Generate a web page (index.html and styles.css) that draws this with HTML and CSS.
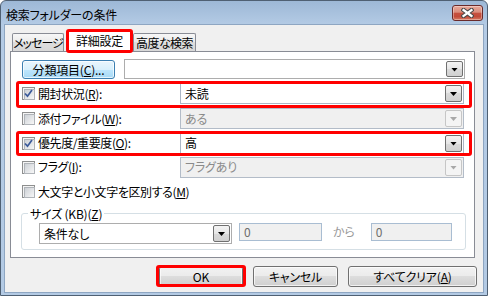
FILE: index.html
```html
<!DOCTYPE html>
<html lang="ja">
<head>
<meta charset="utf-8">
<title>検索フォルダーの条件</title>
<link rel="stylesheet" href="styles.css">
</head>
<body>
<div class="window">
  <div class="titlebar">
    <span class="title">検索フォルダーの条件</span>
    <span class="close">
      <svg width="13" height="10" viewBox="0 0 13 10">
        <path d="M2.5 2 L10.5 8 M10.5 2 L2.5 8" stroke="#4a4a4a" stroke-width="4.4" stroke-linecap="square" fill="none"/>
        <path d="M2.5 2 L10.5 8 M10.5 2 L2.5 8" stroke="#ffffff" stroke-width="2.2" stroke-linecap="square" fill="none"/>
      </svg>
    </span>
  </div>
  <div class="client">
    <div class="tabs">
      <div class="tab t1">メッセージ</div>
      <div class="tab active">詳細設定</div>
      <div class="tab t3">高度な検索</div>
    </div>
    <div class="panel">
      <div class="row1">
        <div class="btn blue cat">分類項目(<u>C</u>)...</div>
        <div class="combo wide"><span class="val"></span><span class="arrow"><i></i></span></div>
      </div>
      <div class="row hl r25">
        <span class="cb checked"><svg width="9" height="9" viewBox="0 0 9 9"><path d="M1 4.5 L3.5 7.2 L8 1" stroke="#3b5a9a" stroke-width="1.7" fill="none"/></svg></span>
        <span class="lbl">開封状況(<u>R</u>):</span>
        <div class="combo"><span class="val">未読</span><span class="arrow"><i></i></span></div>
      </div>
      <div class="row r25">
        <span class="cb"></span>
        <span class="lbl">添付ファイル(<u>W</u>):</span>
        <div class="combo dis"><span class="val">ある</span><span class="arrow"><i></i></span></div>
      </div>
      <div class="row hl hl-b r24">
        <span class="cb checked"><svg width="9" height="9" viewBox="0 0 9 9"><path d="M1 4.5 L3.5 7.2 L8 1" stroke="#3b5a9a" stroke-width="1.7" fill="none"/></svg></span>
        <span class="lbl">優先度/重要度(<u>O</u>):</span>
        <div class="combo"><span class="val">高</span><span class="arrow"><i></i></span></div>
      </div>
      <div class="row r24">
        <span class="cb"></span>
        <span class="lbl">フラグ(<u>I</u>):</span>
        <div class="combo dis"><span class="val">フラグあり</span><span class="arrow"><i></i></span></div>
      </div>
      <div class="row r25">
        <span class="cb"></span>
        <span class="lbl">大文字と小文字を区別する(<u>M</u>)</span>
      </div>
      <fieldset class="group">
        <legend>サイズ (KB)(<u>Z</u>)</legend>
        <div class="group-row">
          <div class="combo size"><span class="val">条件なし</span><span class="arrow"><i></i></span></div>
          <div class="input dis">0</div>
          <span class="kara">から</span>
          <div class="input dis in2">0</div>
        </div>
      </fieldset>
    </div>
    <div class="buttons">
      <div class="btn ok">OK</div>
      <div class="btn cancel">キャンセル</div>
      <div class="btn clear">すべてクリア(<u>A</u>)</div>
    </div>
  </div>
</div>
</body>
</html>
```

FILE: styles.css
```css
* { box-sizing: border-box; }
html, body { margin: 0; padding: 0; }
body {
  width: 488px;
  height: 296px;
  overflow: hidden;
  background: #ffffff;
  font-family: "Noto Sans CJK JP", "Noto Sans", sans-serif;
  font-size: 12px;
  font-feature-settings: "palt";
  letter-spacing: -0.2px;
  color: #000;
}
u { text-decoration: underline; text-underline-offset: 1px; }

.window {
  width: 488px;
  height: 296px;
  display: flex;
  flex-direction: column;
  padding: 0 4px 3px 4px;
  border: 1px solid #4f6073;
  border-radius: 6px 6px 0 0;
  background: linear-gradient(#9db8d6, #b4cbe5 24px, #b3cae4);
}

.titlebar {
  height: 24px;
  display: flex;
  justify-content: space-between;
  align-items: flex-start;
}
.title {
  margin: 7px 0 0 1px;
  line-height: 14px;
  color: #000;
}
.close {
  margin-top: 4px;
  width: 31px;
  height: 16px;
  border: 1px solid #6a2a2a;
  border-radius: 3px;
  background: linear-gradient(#e9a99a, #d98c7c 45%, #c6503f 50%, #c24a39 75%, #d77a62);
  box-shadow: inset 0 0 0 1px rgba(255,255,255,0.35);
  display: flex;
  align-items: center;
  justify-content: center;
}

.client {
  flex: 1;
  background: #f0f0f0;
  outline: 1px solid #8ea6c2;
  padding: 4px 6px 0 5px;
  display: flex;
  flex-direction: column;
}

.tabs {
  height: 22px;
  display: flex;
  align-items: flex-end;
  padding-left: 2px;
  position: relative;
  z-index: 1;
}
.tab {
  height: 18px;
  border: 1px solid #898c95;
  border-bottom: none;
  border-radius: 2px 2px 0 0;
  background: linear-gradient(#f7f7f7, #ebebeb 50%, #dedede 50%, #d8d8d8);
  display: flex;
  align-items: center;
  justify-content: center;
  line-height: 14px;
  padding-top: 1px;
  white-space: nowrap;
}
.t1 { width: 52px; letter-spacing: -1px; }
.t3 { width: 63px; letter-spacing: -0.6px; }
.tab.active {
  width: 67px;
  height: 24px;
  margin-left: 2px;
  margin-bottom: -2px;
  background: #ffffff;
  border: 3px solid #ff0000;
  border-radius: 3px;
  padding-top: 0;
}

.panel {
  width: 465px;
  height: 207px;
  margin-right: 2px;
  border: 1px solid #898c95;
  background: #ffffff;
  padding: 7px 2px 0 5px;
  display: flex;
  flex-direction: column;
}

.row1 {
  height: 20px;
  display: flex;
  align-items: flex-start;
  padding: 0 7px 0 6px;
  gap: 9px;
}
.btn {
  height: 21px;
  border: 1px solid #707070;
  border-radius: 3px;
  background: linear-gradient(#f2f2f2, #ebebeb 50%, #dddddd 50%, #cfcfcf);
  box-shadow: inset 0 0 0 1px rgba(255,255,255,0.7);
  display: flex;
  align-items: center;
  justify-content: center;
  line-height: 14px;
  position: relative;
  white-space: nowrap;
}
.btn.blue {
  border-color: #3c7fb1;
  background: linear-gradient(#eaf6fd, #d9f0fc 50%, #bee6fd 50%, #a7d9f5);
}
.cat { width: 93px; height: 19px; margin-top: 1px; }

.combo {
  width: 284px;
  height: 21px;
  border: 1px solid #abb6c6;
  background: #ffffff;
  display: flex;
  align-items: center;
  padding: 1px;
}
.combo.wide { width: 341px; height: 20px; border-color: #adadad; }
.combo .val {
  flex: 1;
  padding-left: 3px;
  line-height: 14px;
  white-space: nowrap;
}
.arrow {
  width: 17px;
  height: 17px;
  border: 1px solid #707070;
  border-radius: 2px;
  background: linear-gradient(#f4f4f4, #e6e6e6 50%, #dadada 50%, #d0d0d0);
  display: flex;
  align-items: center;
  justify-content: center;
}
.combo.wide .arrow { height: 16px; }
.arrow i {
  display: block;
  width: 7px;
  height: 4px;
  margin-top: 1px;
  background: #000;
  clip-path: polygon(0 0, 100% 0, 50% 100%);
}
.combo.dis { background: #f0f0f0; border-color: #b3bcc8; }
.combo.dis .val { color: #8a8a8a; }
.combo.dis .arrow {
  border-color: #c6c6c6;
  background: #f4f4f4;
}
.combo.dis .arrow i { background: #a8a8a8; }

.row {
  display: flex;
  align-items: center;
  padding: 0 8px 0 6px;
  position: relative;
}
.row1 + .row { margin-top: 2px; }
.r25 { height: 25px; }
.r24 { height: 24px; }
.hl::after {
  content: "";
  position: absolute;
  left: 0;
  right: 0;
  top: 0;
  bottom: -2px;
  border: 3px solid #ff0000;
  border-radius: 3px;
  pointer-events: none;
}
.hl-b::after { bottom: -1px; }

.cb {
  width: 13px;
  height: 13px;
  flex: none;
  border: 1px solid #8e8f8f;
  background: #f4f4f4;
  padding: 1px;
  position: relative;
}
.cb::before {
  content: "";
  display: block;
  width: 9px;
  height: 9px;
  border: 1px solid #b0b4b9;
  background: linear-gradient(135deg, #cdd1d6, #f7f7f7);
}
.cb svg { position: absolute; left: 1px; top: 1px; }
.lbl {
  flex: 1;
  margin-left: 3px;
  line-height: 14px;
  white-space: nowrap;
  letter-spacing: -0.4px;
}

.group {
  margin: 3px 6px 0 5px;
  padding: 3px 8px 5px 6px;
  border: 1px solid #d5dfe5;
  border-radius: 3px;
  min-width: 0;
}
.group legend {
  padding: 0 2px;
  line-height: 13px;
}
.group-row {
  display: flex;
  align-items: flex-start;
  margin-left: 11px;
}
.combo.size { width: 193px; border-color: #adadad; }
.input {
  width: 83px;
  height: 18px;
  border: 1px solid #a9bdd2;
  background: #f0f0f0;
  padding-left: 4px;
  line-height: 16px;
  color: #6d6d6d;
  margin-left: 7px;
}
.input.in2 { width: 81px; margin-left: 0; }
.kara {
  margin: 0 16px 0 11px;
  line-height: 18px;
  color: #9a9a9a;
}

.buttons {
  display: flex;
  justify-content: flex-end;
  gap: 10px;
  margin-top: 8px;
}
.ok { width: 84px; }
.cancel { width: 85px; }
.clear { width: 129px; }
.ok::after {
  content: "";
  position: absolute;
  left: -4px;
  right: -4px;
  top: -2px;
  bottom: -1px;
  border: 3px solid #ff0000;
  border-radius: 3px;
}
```
